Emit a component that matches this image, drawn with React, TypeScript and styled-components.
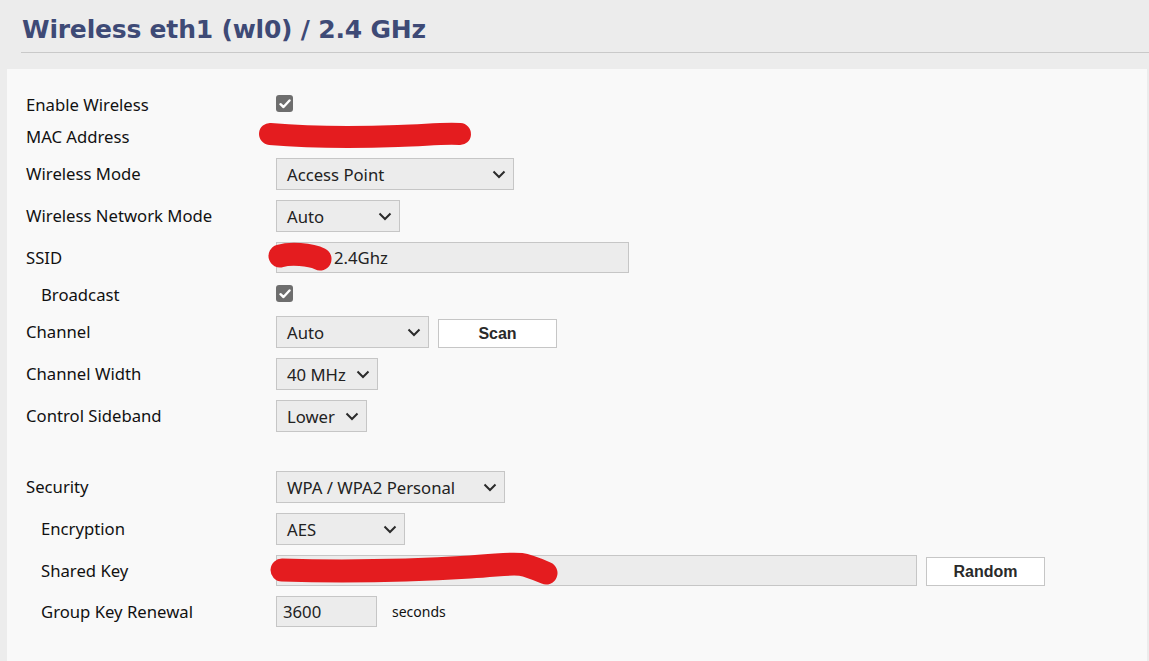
import React from "react";
import styled, { createGlobalStyle } from "styled-components";

const GlobalStyle = createGlobalStyle`
  html, body {
    margin: 0;
    padding: 0;
    background: #ececec;
  }
  body {
    font-family: "Noto Sans", "DejaVu Sans", sans-serif;
    color: #111;
  }
`;

const Page = styled.div`
  display: flex;
  flex-direction: column;
  min-height: 661px;
`;

const Header = styled.div`
  margin-left: 21px;
  height: 53px;
  border-bottom: 1px solid #c9c9c9;
  box-sizing: border-box;
  display: flex;
  align-items: flex-end;
`;

const Title = styled.h1`
  margin: 0 0 8px 1px;
  font-family: "DejaVu Sans", Verdana, sans-serif;
  font-size: 25px;
  font-weight: 700;
  color: #3e4a76;
  letter-spacing: -0.2px;
`;

const Panel = styled.div`
  margin: 16px 2px 0 7px;
  background: #f9f9f9;
  padding: 19px 0 40px 19px;
  flex: 1;
`;

const Row = styled.div<{ $tall?: boolean }>`
  display: grid;
  grid-template-columns: 250px 1fr;
  align-items: center;
  min-height: ${(p) => (p.$tall ? 23 : 22)}px;
  padding: 5px 0;
`;

const Spacer = styled.div`
  height: 29px;
`;

const Label = styled.div<{ $indent?: boolean }>`
  font-size: 16.7px;
  line-height: 22px;
  padding-left: ${(p) => (p.$indent ? "15px" : "0")};
  white-space: nowrap;
`;

const Value = styled.div`
  position: relative;
  display: flex;
  align-items: center;
  gap: 9px;
`;

const Check = styled.span`
  width: 17px;
  height: 17px;
  border-radius: 3px;
  background: #6e6e6e;
  display: inline-flex;
  align-items: center;
  justify-content: center;
  margin-top: -2px;
`;

const SelectBox = styled.div<{ $w: number }>`
  width: ${(p) => p.$w}px;
  height: 32px;
  box-sizing: border-box;
  border: 1px solid #c6c6c6;
  background: #ececec;
  display: flex;
  align-items: center;
  justify-content: space-between;
  padding: 0 7px 0 10px;
  font-size: 16.7px;
  color: #222;
`;

const InputBox = styled.div<{ $w: number; $pad?: number }>`
  width: ${(p) => p.$w}px;
  height: 31px;
  box-sizing: border-box;
  border: 1px solid #c6c6c6;
  background: #ececec;
  display: flex;
  align-items: center;
  padding-left: ${(p) => p.$pad || 6}px;
  font-size: 16.7px;
  color: #222;
`;

const Button = styled.div<{ $end?: boolean }>`
  width: 119px;
  height: 29px;
  box-sizing: border-box;
  border: 1px solid #c6c6c6;
  background: #fff;
  display: flex;
  align-items: center;
  justify-content: center;
  align-self: ${(p) => (p.$end ? "flex-end" : "center")};
  margin-top: ${(p) => (p.$end ? 0 : 2)}px;
  font-family: "Liberation Sans", Arial, sans-serif;
  font-weight: 700;
  font-size: 16px;
  color: #2a2a2a;
`;

const Unit = styled.span`
  margin-left: 6px;
  font-size: 14px;
  color: #111;
`;

const Scribble = styled.svg<{ $left: number; $top: number }>`
  position: absolute;
  left: ${(p) => p.$left}px;
  top: ${(p) => p.$top}px;
  overflow: visible;
  pointer-events: none;
`;

const Chevron = () => (
  <svg width="14" height="9" viewBox="0 0 14 9">
    <path d="M1.5 1.5 L7 7 L12.5 1.5" fill="none" stroke="#2b2b2b" strokeWidth="2" />
  </svg>
);

const CheckMark = () => (
  <Check>
    <svg width="12" height="10" viewBox="0 0 12 10">
      <path d="M1.5 5.2 L4.5 8 L10.5 1.5" fill="none" stroke="#fff" strokeWidth="2.4" strokeLinecap="round" strokeLinejoin="round" />
    </svg>
  </Check>
);

const Select = ({ w, value }: { w: number; value: string }) => (
  <SelectBox $w={w}>
    <span>{value}</span>
    <Chevron />
  </SelectBox>
);

const RED = "#e41c1f";

const App = () => {
  return (
    <Page>
      <GlobalStyle />
      <Header>
        <Title>Wireless eth1 (wl0) / 2.4 GHz</Title>
      </Header>
      <Panel>
        <Row $tall>
          <Label>Enable Wireless</Label>
          <Value>
            <CheckMark />
          </Value>
        </Row>
        <Row>
          <Label>MAC Address</Label>
          <Value>
            <Scribble $left={-18} $top={-17} width="220" height="30">
              <path
                d="M12 14 C 60 18, 110 17, 140 16 S 185 13, 202 14"
                fill="none"
                stroke={RED}
                strokeWidth="22"
                strokeLinecap="round"
              />
            </Scribble>
          </Value>
        </Row>
        <Row>
          <Label>Wireless Mode</Label>
          <Value>
            <Select w={238} value="Access Point" />
          </Value>
        </Row>
        <Row>
          <Label>Wireless Network Mode</Label>
          <Value>
            <Select w={124} value="Auto" />
          </Value>
        </Row>
        <Row>
          <Label>SSID</Label>
          <Value>
            <InputBox $w={353} $pad={57}>
              2.4Ghz
            </InputBox>
            <Scribble $left={-6} $top={2} width="70" height="28">
              <path
                d="M10 12 C 20 9, 40 10, 50 15"
                fill="none"
                stroke={RED}
                strokeWidth="23"
                strokeLinecap="round"
              />
            </Scribble>
          </Value>
        </Row>
        <Row $tall>
          <Label $indent>Broadcast</Label>
          <Value>
            <CheckMark />
          </Value>
        </Row>
        <Row>
          <Label>Channel</Label>
          <Value>
            <Select w={153} value="Auto" />
            <Button $end>Scan</Button>
          </Value>
        </Row>
        <Row>
          <Label>Channel Width</Label>
          <Value>
            <Select w={102} value="40 MHz" />
          </Value>
        </Row>
        <Row>
          <Label>Control Sideband</Label>
          <Value>
            <Select w={91} value="Lower" />
          </Value>
        </Row>
        <Spacer />
        <Row>
          <Label>Security</Label>
          <Value>
            <Select w={229} value="WPA / WPA2 Personal" />
          </Value>
        </Row>
        <Row>
          <Label $indent>Encryption</Label>
          <Value>
            <Select w={129} value="AES" />
          </Value>
        </Row>
        <Row>
          <Label $indent>Shared Key</Label>
          <Value>
            <InputBox $w={641} />
            <Button>Random</Button>
            <Scribble $left={-6} $top={-5} width="300" height="36">
              <path
                d="M12 20 C 80 22, 150 20, 200 17 S 245 10, 276 23"
                fill="none"
                stroke={RED}
                strokeWidth="23"
                strokeLinecap="round"
              />
            </Scribble>
          </Value>
        </Row>
        <Row>
          <Label $indent>Group Key Renewal</Label>
          <Value>
            <InputBox $w={101}>3600</InputBox>
            <Unit>seconds</Unit>
          </Value>
        </Row>
      </Panel>
    </Page>
  );
};

export default App;
